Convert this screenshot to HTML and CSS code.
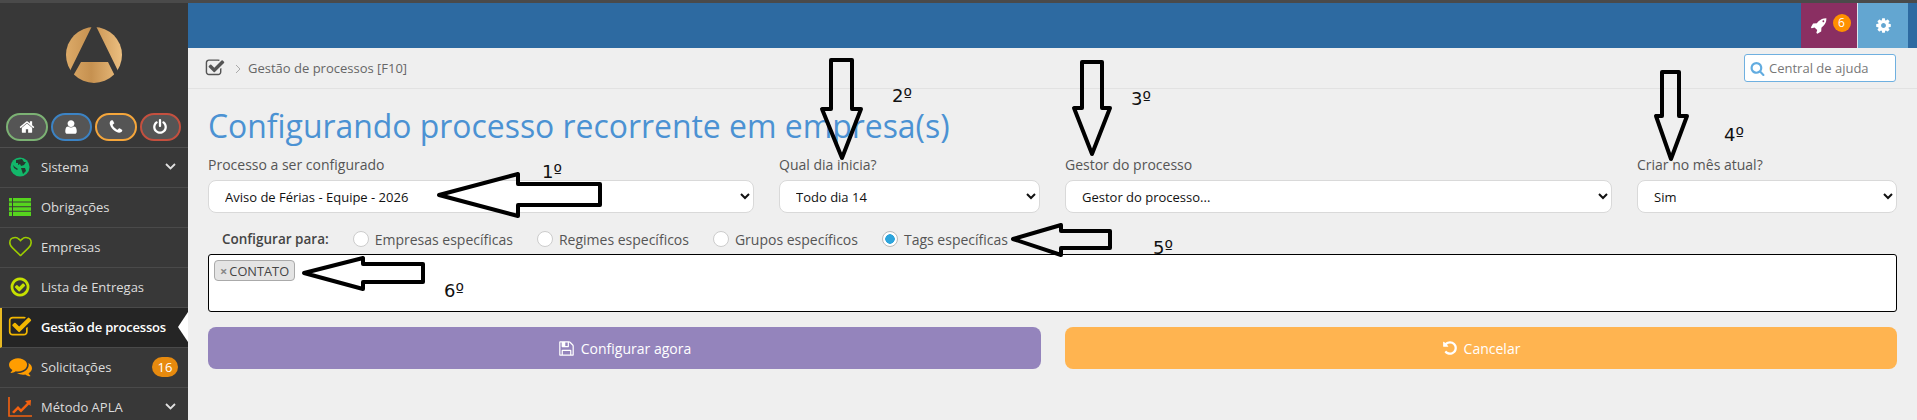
FILE: index.html
```html
<!DOCTYPE html>
<html lang="pt-BR">
<head>
<meta charset="utf-8">
<title>Gestão de processos</title>
<link rel="stylesheet" href="styles.css">
</head>
<body>
<div class="strip"></div>
<div class="app">
  <aside class="sidebar">
    <div class="logo">
      <svg width="60" height="60" viewBox="63 25 60 60">
        <defs>
          <linearGradient id="gold" x1="0" y1="0" x2="1" y2="0">
            <stop offset="0" stop-color="#dcaa68"/>
            <stop offset="0.45" stop-color="#c69150"/>
            <stop offset="1" stop-color="#ecbf80"/>
          </linearGradient>
        </defs>
        <circle cx="93" cy="55" r="28" fill="url(#gold)"/>
        <path d="M91 26 L95 26 L118 73 L114 76 L107 62 L80 62 L72 76 L68 73 Z" fill="#383838"/>
      </svg>
    </div>
    <div class="quick">
      <a class="pill pill-green"><svg class="ic-pill" viewBox="0 0 1792 1792"><path d="M1472 992v480q0 26-19 45t-45 19h-384v-384h-256v384h-384q-26 0-45-19t-19-45v-480q0-1 .5-3t.5-3l575-474 575 474q1 2 1 6zm223-69l-62 74q-8 9-21 11h-3q-13 0-21-7l-692-577-692 577q-12 8-24 7-13-2-21-11l-62-74q-8-10-7-23.5t11-21.5l719-599q32-26 76-26t76 26l244 204v-195q0-14 9-23t23-9h192q14 0 23 9t9 23v408l219 182q10 8 11 21.5t-7 23.5z"/></svg></a>
      <a class="pill pill-blue"><svg class="ic-pill" viewBox="0 0 1792 1792"><path d="M1536 1399q0 109-62.5 187t-150.5 78h-854q-88 0-150.5-78t-62.5-187q0-85 8.5-160.5t31.5-152 58.5-131 94-89 134.5-34.5q131 128 313 128t313-128q76 0 134.5 34.5t94 89 58.5 131 31.5 152 8.5 160.5zm-256-887q0 159-112.5 271.5t-271.5 112.5-271.5-112.5-112.5-271.5 112.5-271.5 271.5-112.5 271.5 112.5 112.5 271.5z"/></svg></a>
      <a class="pill pill-orange"><svg class="ic-pill" viewBox="0 0 1792 1792"><path d="M1600 1240q0 27-10 70.5t-21 68.5q-21 50-122 106-94 51-186 51-27 0-53-3.5t-57.5-12.5-47-14.5-55.5-20.5-49-18q-98-35-175-83-127-79-264-216t-216-264q-48-77-83-175-3-9-18-49t-20.5-55.5-14.5-47-12.5-57.5-3.5-53q0-92 51-186 56-101 106-122 25-11 68.5-21t70.5-10q14 0 21 3 18 6 53 76 11 19 30 54t35 63.5 31 53.5q3 4 17.5 25t21.5 35.5 7 28.5q0 20-28.5 50t-62 55-62 53-28.5 46q0 9 5 22.5t8.5 20.5 14 24 11.5 19q76 137 174 235t235 174q2 1 19 11.5t24 14 20.5 8.5 22.5 5q18 0 46-28.5t53-62 55-62 50-28.5q14 0 28.5 7t35.5 21.5 25 17.5q25 15 53.5 31t63.5 35 54 30q70 35 76 53 3 7 3 21z"/></svg></a>
      <a class="pill pill-red"><svg class="ic-pill" viewBox="0 0 1792 1792"><path d="M1664 896q0 156-61 298t-164 245-245 164-298 61-298-61-245-164-164-245-61-298q0-182 80.5-343t226.5-270q43-32 95.5-25t83.5 50q32 42 24.5 94.5t-49.5 84.5q-98 74-151.5 181t-53.5 228q0 104 40.5 198.5t109.5 163.5 163.5 109.5 198.5 40.5 198.5-40.5 163.5-109.5 109.5-163.5 40.5-198.5q0-121-53.5-228t-151.5-181q-42-32-49.5-84.5t24.5-94.5q31-43 84-50t95 25q146 109 226.5 270t80.5 343zm-640-768v640q0 52-38 90t-90 38-90-38-38-90v-640q0-52 38-90t90-38 90 38 38 90z"/></svg></a>
    </div>
    <nav class="menu">
      <a class="item">
        <span class="item-icon">
          <svg width="20" height="20" viewBox="0 0 20 20"><circle cx="10" cy="10" r="9.5" fill="#12b76a"/><path d="M6 3 L12 2 L14 5 L16 5 L14 8 L11 9 L10 7 L8 8 L8 6 L6 6 Z M11 11 L15 11 L16 14 L13 17 L12 14 Z M3 8 L5 10 L8 12 L7 13 L4 11 Z" fill="#26382e"/></svg>
        </span>
        <span class="item-label">Sistema</span>
        <svg class="caret" width="11" height="7" viewBox="0 0 11 7"><path d="M1 1 L5.5 5.5 L10 1" fill="none" stroke="#e0e0e0" stroke-width="1.8"/></svg>
      </a>
      <a class="item">
        <span class="item-icon">
          <svg width="22" height="18" viewBox="0 0 22 18" fill="#56d41e"><path d="M0 0h3v3.6H0zM4 0h18v3.6H4zM0 4.6h3v3.6H0zM4 4.6h18v3.6H4zM0 9.2h3v3.6H0zM4 9.2h18v3.6H4zM0 13.8h3V18H0zM4 13.8h18V18H4z"/></svg>
        </span>
        <span class="item-label">Obrigações</span>
      </a>
      <a class="item">
        <span class="item-icon">
          <svg width="23" height="23" viewBox="0 0 1792 1792" fill="#9ccc00"><path d="M1664 596q0-81-21.5-143t-55-98.5-81.5-59.5-94-31-98-8-112 25.5-110.5 64-86.5 72-60 61.5q-18 22-49 22t-49-22q-24-28-60-61.5t-86.5-72-110.5-64-112-25.5-98 8-94 31-81.5 59.5-55 98.5-21.5 143q0 168 187 355l581 560 580-559q188-188 188-356zm128 0q0 221-229 450l-623 600q-18 18-44 18t-44-18l-624-602q-10-8-27.5-26t-55.5-65.5-68-97.5-53.5-121-23.5-138q0-220 127-344t351-124q62 0 126.5 21.5t120 58 95.5 68.5 76 68q36-36 76-68t95.5-68.5 120-58 126.5-21.5q224 0 351 124t127 344z"/></svg>
        </span>
        <span class="item-label">Empresas</span>
      </a>
      <a class="item">
        <span class="item-icon">
          <svg width="22" height="22" viewBox="0 0 1792 1792" fill="#c6e000"><path d="M1299 813l-422 422q-19 19-45 19t-45-19l-294-294q-19-19-19-45t19-45l102-102q19-19 45-19t45 19l147 147 275-275q19-19 45-19t45 19l102 102q19 19 19 45t-19 45zm141 83q0-148-73-273t-198-198-273-73-273 73-198 198-73 273 73 273 198 198 273 73 273-73 198-198 73-273zm224 0q0 209-103 385.5t-279.5 279.5-385.5 103-385.5-103-279.5-279.5-103-385.5 103-385.5 279.5-279.5 385.5-103 385.5 103 279.5 279.5 103 385.5z"/></svg>
        </span>
        <span class="item-label">Lista de Entregas</span>
      </a>
      <a class="item item-active">
        <span class="item-icon">
          <svg width="24" height="24" viewBox="0 0 1792 1792" fill="#f2b600"><path d="M1472 930v318q0 119-84.5 203.5t-203.5 84.5h-832q-119 0-203.5-84.5t-84.5-203.5v-832q0-119 84.5-203.5t203.5-84.5h832q63 0 117 25 15 7 18 23 3 17-9 29l-49 49q-10 10-23 10-3 0-9-2-23-6-45-6h-832q-66 0-113 47t-47 113v832q0 66 47 113t113 47h832q66 0 113-47t47-113v-254q0-13 9-22l64-64q10-10 23-10 6 0 12 3 20 8 20 29zm231-489l-814 814q-24 24-57 24t-57-24l-430-430q-24-24-24-57t24-57l110-110q24-24 57-24t57 24l263 263 647-647q24-24 57-24t57 24l110 110q24 24 24 57t-24 57z"/></svg>
        </span>
        <span class="item-label">Gestão de processos</span>
        <span class="pointer"></span>
      </a>
      <a class="item">
        <span class="item-icon">
          <svg width="23" height="23" viewBox="0 0 1792 1792" fill="#ff9d00"><path d="M1408 768q0 139-94 257t-256.5 186.5-353.5 68.5q-86 0-176-16-124 88-278 128-36 9-86 16h-3q-11 0-20.5-8t-11.5-21q-1-3-1-6.5t.5-6.5 2-6l2.5-5 3.5-5.5 4-5 4.5-5 4-4.5q5-6 23-25t26-29.5 22.5-29 25-38.5 20.5-44q-124-72-195-177t-71-224q0-139 94-257t256.5-186.5 353.5-68.5 353.5 68.5 256.5 186.5 94 257zm384 256q0 120-71 224.5t-195 176.5q10 24 20.5 44t25 38.5 22.5 29 26 29.5 23 25q1 1 4 4.5t4.5 5 4 5 3.5 5.5l2.5 5 2 6 .5 6.5-1 6.5q-3 14-13 22t-22 7q-50-7-86-16-154-40-278-128-90 16-176 16-271 0-472-132 58 4 88 4 161 0 309-45t264-129q125-92 192-212t67-254q0-77-23-152 129 71 204 178t75 230z"/></svg>
        </span>
        <span class="item-label">Solicitações</span>
        <span class="count">16</span>
      </a>
      <a class="item">
        <span class="item-icon">
          <svg width="24" height="20" viewBox="0 0 24 20"><path d="M1 0 V19 H24" fill="none" stroke="#f4610f" stroke-width="1.6"/><path d="M4 15 L10 9 L13 12 L19 6 L17 4 L23 3 L22.5 9 L21 7.5 L13 15.5 L10 12.5 L6 16.5 Z" fill="#f4610f"/></svg>
        </span>
        <span class="item-label">Método APLA</span>
        <svg class="caret" width="11" height="7" viewBox="0 0 11 7"><path d="M1 1 L5.5 5.5 L10 1" fill="none" stroke="#e0e0e0" stroke-width="1.8"/></svg>
      </a>
    </nav>
  </aside>

  <main class="main">
    <header class="topbar">
      <div class="tool tool-rocket">
        <svg width="17" height="17" viewBox="0 0 1792 1792" fill="#fff"><path d="M1504 448q0-40-28-68t-68-28-68 28-28 68 28 68 68 28 68-28 28-68zm224-288q0 249-75.5 430.5t-253.5 360.5q-81 80-195 176l-20 379q-2 16-16 26l-384 224q-7 4-16 4-12 0-23-9l-64-64q-13-14-8-32l85-276-281-281-276 85q-3 1-9 1-14 0-23-9l-64-64q-17-19-5-39l224-384q10-14 26-16l379-20q96-114 176-195 188-187 358-258t431-71q14 0 24 9.5t10 22.5z"/></svg>
        <span class="tool-badge">6</span>
      </div>
      <div class="tool tool-gear">
        <svg width="17" height="17" viewBox="0 0 1792 1792" fill="#fff"><path d="M1152 896q0-106-75-181t-181-75-181 75-75 181 75 181 181 75 181-75 75-181zm512-109v222q0 12-8 23t-20 13l-185 28q-19 54-39 91 35 50 107 138 10 12 10 25t-9 23q-27 37-99 108t-94 71q-12 0-26-9l-138-108q-44 23-91 38-16 136-29 186-7 28-36 28h-222q-14 0-24.5-8.5t-11.5-21.5l-28-184q-49-16-90-37l-141 107q-10 9-25 9-14 0-25-11-126-114-165-168-7-10-7-23 0-12 8-23 15-21 51-66.5t54-70.5q-27-50-41-99l-183-27q-13-2-21-12.5t-8-23.5v-222q0-12 8-23t19-13l186-28q14-46 39-92-40-57-107-138-10-12-10-24 0-10 9-23 26-36 98.5-107.5t94.5-71.5q13 0 26 10l138 107q44-23 91-38 16-136 29-186 7-28 36-28h222q14 0 24.5 8.5t11.5 21.5l28 184q49 16 90 37l142-107q9-9 24-9 13 0 25 10 129 119 165 170 7 8 7 22 0 12-8 23-15 21-51 66.5t-54 70.5q26 50 41 98l183 28q13 2 21 12.5t8 23.5z"/></svg>
      </div>
    </header>

    <div class="crumbs">
      <svg class="crumb-icon" width="20" height="20" viewBox="0 0 1792 1792" fill="#555"><path d="M1472 930v318q0 119-84.5 203.5t-203.5 84.5h-832q-119 0-203.5-84.5t-84.5-203.5v-832q0-119 84.5-203.5t203.5-84.5h832q63 0 117 25 15 7 18 23 3 17-9 29l-49 49q-10 10-23 10-3 0-9-2-23-6-45-6h-832q-66 0-113 47t-47 113v832q0 66 47 113t113 47h832q66 0 113-47t47-113v-254q0-13 9-22l64-64q10-10 23-10 6 0 12 3 20 8 20 29zm231-489l-814 814q-24 24-57 24t-57-24l-430-430q-24-24-24-57t24-57l110-110q24-24 57-24t57 24l263 263 647-647q24-24 57-24t57 24l110 110q24 24 24 57t-24 57z"/></svg>
      <svg class="crumb-sep" width="6" height="10" viewBox="0 0 6 10"><path d="M1 1 L5 5 L1 9" fill="none" stroke="#aaa" stroke-width="1"/></svg>
      <span class="crumb-text">Gestão de processos [F10]</span>
      <label class="help">
        <svg width="15" height="15" viewBox="0 0 1792 1792" fill="#62ace0"><path d="M1216 832q0-185-131.5-316.5t-316.5-131.5-316.5 131.5-131.5 316.5 131.5 316.5 316.5 131.5 316.5-131.5 131.5-316.5zm512 832q0 52-38 90t-90 38q-54 0-90-38l-343-342q-179 124-399 124-143 0-273.5-55.5t-225-150-150-225-55.5-273.5 55.5-273.5 150-225 225-150 273.5-55.5 273.5 55.5 225 150 150 225 55.5 273.5q0 220-124 399l343 343q37 37 37 90z"/></svg>
        <span>Central de ajuda</span>
      </label>
    </div>

    <section class="content">
      <h1 class="title">Configurando processo recorrente em empresa(s)</h1>

      <div class="fields">
        <div class="field">
          <label class="field-label">Processo a ser configurado</label>
          <select class="select"><option>Aviso de Férias - Equipe - 2026</option></select>
        </div>
        <div class="field">
          <label class="field-label">Qual dia inicia?</label>
          <select class="select"><option>Todo dia 14</option></select>
        </div>
        <div class="field">
          <label class="field-label">Gestor do processo</label>
          <select class="select"><option>Gestor do processo...</option></select>
        </div>
        <div class="field">
          <label class="field-label">Criar no mês atual?</label>
          <select class="select"><option>Sim</option></select>
        </div>
      </div>

      <div class="radios">
        <span class="radios-title">Configurar para:</span>
        <label class="radio"><input type="radio" name="alvo"><span>Empresas específicas</span></label>
        <label class="radio"><input type="radio" name="alvo"><span>Regimes específicos</span></label>
        <label class="radio"><input type="radio" name="alvo"><span>Grupos específicos</span></label>
        <label class="radio"><input type="radio" name="alvo" checked><span>Tags específicas</span></label>
      </div>

      <div class="tagbox">
        <span class="tag"><span class="tag-x">×</span>CONTATO</span>
      </div>

      <div class="actions">
        <button class="btn btn-save">
          <svg width="17" height="17" viewBox="0 0 1792 1792" fill="#fff"><path d="M512 1536h768v-384h-768v384zm896 0h128v-896q0-14-10-38.5t-20-34.5l-281-281q-10-10-34-20t-39-10v416q0 40-28 68t-68 28h-576q-40 0-68-28t-28-68v-416h-128v1280h128v-416q0-40 28-68t68-28h832q40 0 68 28t28 68v416zm-384-928v-320q0-13-9.5-22.5t-22.5-9.5h-192q-13 0-22.5 9.5t-9.5 22.5v320q0 13 9.5 22.5t22.5 9.5h192q13 0 22.5-9.5t9.5-22.5zm640 32v928q0 40-28 68t-68 28h-1344q-40 0-68-28t-28-68v-1344q0-40 28-68t68-28h928q40 0 88 20t76 48l280 280q28 28 48 76t20 88z"/></svg>
          Configurar agora
        </button>
        <button class="btn btn-cancel">
          <svg width="16" height="16" viewBox="0 0 1792 1792" fill="#fff"><path d="M1664 896q0 156-61 298t-164 245-245 164-298 61q-172 0-327-72.5t-264-204.5q-7-10-6.5-22.5t8.5-20.5l137-138q10-9 25-9 16 2 23 12 73 95 179 147t225 52q104 0 198.5-40.5t163.5-109.5 109.5-163.5 40.5-198.5-40.5-198.5-109.5-163.5-163.5-109.5-198.5-40.5q-98 0-188 35.5t-160 101.5l137 138q31 30 14 69-17 40-59 40h-448q-26 0-45-19t-19-45v-448q0-42 40-59 39-17 69 14l130 129q107-101 244.5-156.5t284.5-55.5q156 0 298 61t245 164 164 245 61 298z"/></svg>
          Cancelar
        </button>
      </div>
    </section>
  </main>
</div>

<svg class="notes" width="1917" height="420" viewBox="0 0 1917 420">
  <g class="arrow">
    <path d="M439 195 L518 174 L518 184 L600 184 L600 205 L518 205 L518 216 Z"/>
    <path d="M831 60 L852 60 L852 109 L861 109 L842 158 L822 109 L831 109 Z"/>
    <path d="M1082 62 L1102 62 L1102 108 L1110 108 L1092 154 L1074 108 L1082 108 Z"/>
    <path d="M1662 72 L1679 72 L1679 116 L1687 116 L1671 159 L1656 116 L1662 116 Z"/>
    <path d="M1013 239 L1061 225 L1061 231 L1110 231 L1110 248 L1061 248 L1061 255 Z"/>
    <path d="M304 273 L363 258 L363 264 L423 264 L423 282 L363 282 L363 289 Z"/>
  </g>
  <text class="note" x="542" y="178">1º</text>
  <text class="note" x="892" y="102">2º</text>
  <text class="note" x="1131" y="105">3º</text>
  <text class="note" x="1724" y="141">4º</text>
  <text class="note" x="1153" y="254">5º</text>
  <text class="note" x="444" y="297">6º</text>
</svg>
</body>
</html>
```

FILE: styles.css
```css
* { box-sizing: border-box; }
html, body {
  margin: 0;
  padding: 0;
  height: 420px;
  overflow: hidden;
  background: #efefef;
  font-family: "Open Sans", "Noto Sans", sans-serif;
  font-size: 14px;
  color: #555;
}
body { position: relative; }

.strip { height: 3px; background: #4a4a4a; }
.app { display: flex; height: 417px; }

/* Sidebar */
.sidebar { width: 188px; flex: none; background: #383838; overflow: hidden; }
.logo { height: 110px; display: flex; justify-content: center; padding-top: 22px; }
.logo svg { display: block; }
.quick {
  display: flex;
  gap: 3px;
  padding: 0 7px 6px 6px;
  border-bottom: 1px solid #4f4f4f;
  box-sizing: content-box;
  height: 28px;
}
.pill {
  flex: 1;
  height: 28px;
  border-radius: 14px;
  background: #555;
  border: 2px solid;
  display: flex;
  align-items: center;
  justify-content: center;
}
.pill-green { border-color: #7cb274; }
.pill-blue { border-color: #3c83c4; }
.pill-orange { border-color: #f5a63b; }
.pill-red { border-color: #c4503f; }
.ic-pill { width: 16px; height: 16px; fill: #fff; }

.item {
  position: relative;
  display: flex;
  align-items: center;
  height: 40px;
  padding-left: 8px;
  padding-bottom: 2px;
  border-bottom: 1px solid #4a4a4a;
  color: #dcdcdc;
  font-size: 13px;
}
.item-icon {
  width: 24px;
  flex: none;
  margin-right: 9px;
  display: flex;
  justify-content: center;
}
.item-icon svg { display: block; }
.item-label { flex: 1; white-space: nowrap; }
.caret { margin-right: 12px; }
.item-active {
  background: #252525;
  border-left: 2px solid #e8b923;
  padding-left: 6px;
  color: #fff;
  font-weight: 600;
  letter-spacing: -0.2px;
}
.pointer {
  position: absolute;
  right: 0;
  top: 4px;
  border-style: solid;
  border-width: 15px 10px 15px 0;
  border-color: transparent #fff transparent transparent;
}
.count {
  background: #e78a0e;
  color: #fff;
  height: 20px;
  width: 26px;
  border-radius: 10px;
  margin-right: 10px;
  font-size: 13px;
  font-weight: 400;
  text-align: center;
  line-height: 20px;
}

/* Main */
.main { flex: 1; min-width: 0; }
.topbar {
  height: 45px;
  background: #2d6aa1;
  display: flex;
  justify-content: flex-end;
  padding-right: 9px;
}
.tool { display: flex; align-items: center; justify-content: center; }
.tool-rocket {
  width: 57px;
  background: #8a2f62;
  border-right: 1px solid #dfe6ec;
  gap: 6px;
  padding-left: 2px;
}
.tool-gear { width: 50px; background: #63a6d1; }
.tool-badge {
  width: 18px;
  height: 18px;
  border-radius: 50%;
  background: #ff9000;
  color: #fff;
  font-size: 12px;
  line-height: 17px;
  text-align: center;
  margin-top: -6px;
}

.crumbs {
  height: 41px;
  border-bottom: 1px solid #e2e2e2;
  display: flex;
  align-items: center;
  padding: 0 21px 0 17px;
}
.crumb-icon { margin-right: 10px; }
.crumb-sep { margin-right: 7px; margin-top: 2px; }
.crumb-text { font-size: 13px; color: #666; flex: 1; }
.help {
  width: 152px;
  height: 28px;
  background: #fff;
  border: 1px solid #6fb0e0;
  border-radius: 3px;
  display: flex;
  align-items: center;
  gap: 4px;
  padding-left: 5px;
  font-size: 13px;
  color: #777;
}

.content { padding: 0 20px; }
.title {
  margin: 19px 0 0;
  font-size: 31.9px;
  font-weight: 400;
  line-height: 36px;
  color: #4b92d3;
  white-space: nowrap;
}
.fields {
  display: grid;
  grid-template-columns: 546px 261px 547px 260px;
  column-gap: 25px;
  margin-top: 11px;
}
.field { display: flex; flex-direction: column; }
.field-label { font-size: 14px; line-height: 20px; color: #555; margin-bottom: 5px; }
.select {
  height: 33px;
  width: 100%;
  background: #fff;
  border: 1px solid #d9d9d9;
  border-radius: 8px;
  padding-left: 12px;
  font-family: inherit;
  font-size: 13px;
  color: #111;
}

.radios {
  display: flex;
  align-items: center;
  gap: 24px;
  margin-top: 16px;
  height: 20px;
  padding-left: 14px;
  font-size: 14px;
  color: #555;
}
.radios-title { font-weight: 600; color: #444; font-size: 13.5px; }
.radio { display: flex; align-items: center; gap: 6px; }
.radio input {
  appearance: none;
  margin: 0;
  width: 16px;
  height: 16px;
  border-radius: 50%;
  background: #fff;
  border: 1px solid #ccc;
}
.radio input:checked { background: radial-gradient(circle, #2ea5dc 0 4.5px, #fff 5px); border-color: #b9b9b9; }

.tagbox {
  margin-top: 5px;
  height: 58px;
  background: #fff;
  border: 1px solid #000;
  border-radius: 3px;
  padding: 5px;
}
.tag {
  display: inline-flex;
  align-items: center;
  height: 21px;
  padding: 0 5px;
  background: #e4e4e4;
  border: 1px solid #aaa;
  border-radius: 4px;
  font-size: 12.8px;
  color: #444;
}
.tag-x { color: #888; font-weight: 700; margin-right: 2px; }

.actions {
  display: grid;
  grid-template-columns: 833px 832px;
  column-gap: 24px;
  margin-top: 15px;
}
.btn {
  height: 42px;
  border: 0;
  border-radius: 8px;
  display: flex;
  align-items: center;
  justify-content: center;
  gap: 6px;
  font-family: inherit;
  font-size: 14px;
  color: #fff;
}
.btn-save { background: #9484bc; }
.btn-cancel { background: #ffb450; }

/* Hand-drawn annotations above the screenshot */
.notes { position: absolute; left: 0; top: 0; pointer-events: none; }
.arrow path { fill: none; stroke: #000; stroke-width: 4; stroke-linejoin: round; }
.note { font-family: "DejaVu Sans", sans-serif; font-size: 18px; fill: #111; }
```
